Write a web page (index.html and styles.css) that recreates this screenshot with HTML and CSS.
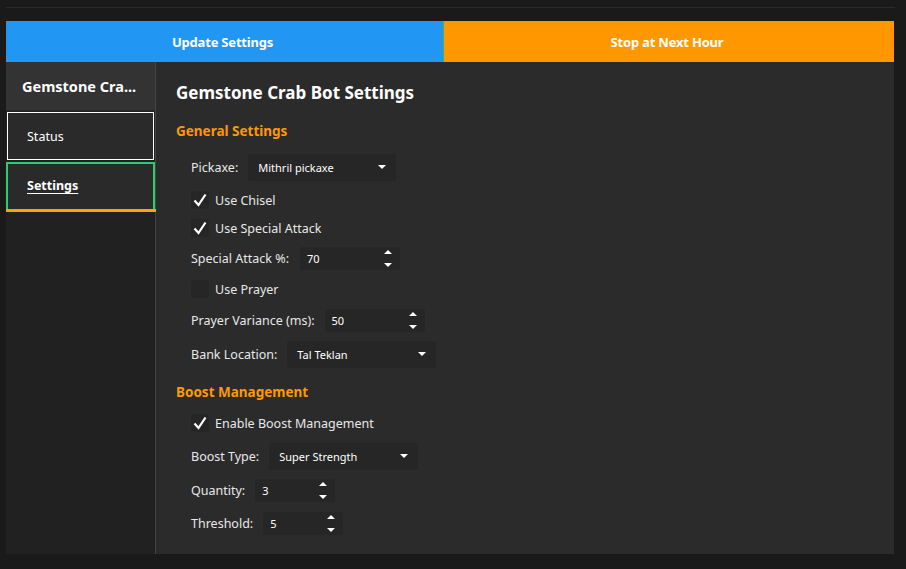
FILE: index.html
```html
<!DOCTYPE html>
<html>
<head>
<meta charset="utf-8">
<link rel="stylesheet" href="styles.css">
</head>
<body>
<div class="app">
  <div class="topline"></div>
  <div class="actions">
    <div class="btn btn-blue">Update Settings</div>
    <div class="btn btn-orange">Stop at Next Hour</div>
  </div>
  <div class="body">
    <aside class="sidebar">
      <div class="side-head">Gemstone Cra...</div>
      <div class="side-item status">Status</div>
      <div class="side-item active">Settings</div>
    </aside>
    <main class="main">
      <h1 class="title">Gemstone Crab Bot Settings</h1>
      <h2 class="section">General Settings</h2>
      <div class="row r-pick"><span class="lbl">Pickaxe:</span><div class="select w148">Mithril pickaxe<span class="caret"></span></div></div>
      <div class="row r-chk1"><span class="cbox"><svg viewBox="0 0 18 18" width="18" height="18"><path d="M3.5 9.5 L7.5 14 L14.5 3.5" fill="none" stroke="#fff" stroke-width="2.2"/></svg></span><span class="lbl">Use Chisel</span></div>
      <div class="row r-chk2"><span class="cbox"><svg viewBox="0 0 18 18" width="18" height="18"><path d="M3.5 9.5 L7.5 14 L14.5 3.5" fill="none" stroke="#fff" stroke-width="2.2"/></svg></span><span class="lbl">Use Special Attack</span></div>
      <div class="row r-spec"><span class="lbl">Special Attack %:</span><div class="num w100">70<span class="spin"><i class="up"></i><i class="dn"></i></span></div></div>
      <div class="row r-pray"><span class="cbox"></span><span class="lbl">Use Prayer</span></div>
      <div class="row r-var"><span class="lbl">Prayer Variance (ms):</span><div class="num w100">50<span class="spin"><i class="up"></i><i class="dn"></i></span></div></div>
      <div class="row r-bank"><span class="lbl">Bank Location:</span><div class="select w149">Tal Teklan<span class="caret"></span></div></div>
      <h2 class="section s2">Boost Management</h2>
      <div class="row r-boost"><span class="cbox"><svg viewBox="0 0 18 18" width="18" height="18"><path d="M3.5 9.5 L7.5 14 L14.5 3.5" fill="none" stroke="#fff" stroke-width="2.2"/></svg></span><span class="lbl">Enable Boost Management</span></div>
      <div class="row r-type"><span class="lbl">Boost Type:</span><div class="select w149">Super Strength<span class="caret"></span></div></div>
      <div class="row r-qty"><span class="lbl">Quantity:</span><div class="num w80">3<span class="spin"><i class="up"></i><i class="dn"></i></span></div></div>
      <div class="row r-thr"><span class="lbl">Threshold:</span><div class="num w80">5<span class="spin"><i class="up"></i><i class="dn"></i></span></div></div>
    </main>
  </div>
</div>
</body>
</html>
```
FILE: styles.css
```css
* { box-sizing: border-box; margin: 0; padding: 0; }
html, body { background: #1a1a1a; }
body { width: 906px; height: 569px; overflow: hidden; font-family: "Noto Sans", "Open Sans", sans-serif; color: #e8e8e8; }
.app { padding: 7px 12px 0 6px; }
.topline { height: 1px; background: #2a2a2a; margin-right: -1px; }
.actions { display: flex; height: 41px; margin-top: 13px; }
.btn { display: flex; align-items: center; justify-content: center; color: #fff; font-weight: 700; font-size: 13px; letter-spacing: -0.2px; }
.btn-blue { width: 438px; background: #2196f3; border-right: 1px solid #4caf50; padding-right: 4px; }
.btn-orange { flex: 1; background: #ff9800; padding-right: 4px; }
.body { display: flex; height: 492px; }
.sidebar { width: 150px; background: #212121; border-right: 1px solid #444; display: flex; flex-direction: column; }
.side-head { height: 49px; background: #333; display: flex; align-items: center; padding-left: 16px; font-weight: 700; font-size: 14.5px; color: #fff; border-bottom: 1px solid #2a2a2a; }
.side-item { height: 48px; display: flex; align-items: center; font-size: 12.5px; color: #fff; background: #2a2a2a; }
.side-item.status { margin: 1px 0 2px 1px; width: 147px; border: 1px solid #fff; padding-left: 19px; height: 48px; padding-top: 1px; }
.side-item.active { width: 149px; border: 2px solid #2ecc71; border-bottom: none; padding-left: 19px; padding-bottom: 5px; font-weight: 700; text-decoration: underline; text-underline-offset: 3px; height: 50px; position: relative; }
.side-item.active::after { content: ""; position: absolute; left: -2px; right: -3px; bottom: 0; height: 3px; background: #ffa500; }
.main { flex: 1; background: #2b2b2b; padding: 20px 20px 0 20px; display: flex; flex-direction: column; align-items: flex-start; }
.title { font-size: 17px; font-weight: 700; color: #fff; line-height: 22px; height: 22px; }
.section { font-size: 13.5px; font-weight: 700; color: #ff9800; line-height: 18px; margin-top: 18px; }
.section.s2 { margin-top: 15px; }
.row { display: flex; align-items: center; padding-left: 15px; font-size: 12.5px; color: #e8e8e8; }
.lbl { white-space: nowrap; }
.cbox { width: 18px; height: 18px; background: #262626; border-radius: 2px; margin-right: 6px; display: flex; }
.select, .num { background: #262626; border-radius: 3px; font-size: 11px; color: #fff; display: flex; align-items: center; position: relative; margin-left: 10px; }
.select { height: 27px; padding-left: 10px; }
.num { height: 23px; padding-left: 7px; }
.w148 { width: 148px; }
.w149 { width: 149px; }
.w100 { width: 100px; }
.w80 { width: 80px; }
.caret { position: absolute; right: 10px; top: 11px; width: 0; height: 0; border-left: 4px solid transparent; border-right: 4px solid transparent; border-top: 4px solid #fff; }
.spin { position: absolute; right: 8px; top: 3px; height: 17px; width: 8px; display: flex; flex-direction: column; justify-content: space-between; }
.spin .up { display: block; width: 0; height: 0; border-left: 4px solid transparent; border-right: 4px solid transparent; border-bottom: 4px solid #fff; }
.spin .dn { display: block; width: 0; height: 0; border-left: 4px solid transparent; border-right: 4px solid transparent; border-top: 4px solid #fff; }
.r-pick { margin-top: 14px; }
.r-chk1 { margin-top: 10px; }
.r-chk2 { margin-top: 10px; }
.r-spec { margin-top: 10px; }
.r-spec .num { margin-left: 11px; }
.r-pray { margin-top: 10px; }
.r-var { margin-top: 11px; }
.r-bank { margin-top: 9px; }
.r-boost { margin-top: 13px; }
.r-type { margin-top: 11px; }
.r-qty { margin-top: 9px; }
.r-thr { margin-top: 10px; }
```
